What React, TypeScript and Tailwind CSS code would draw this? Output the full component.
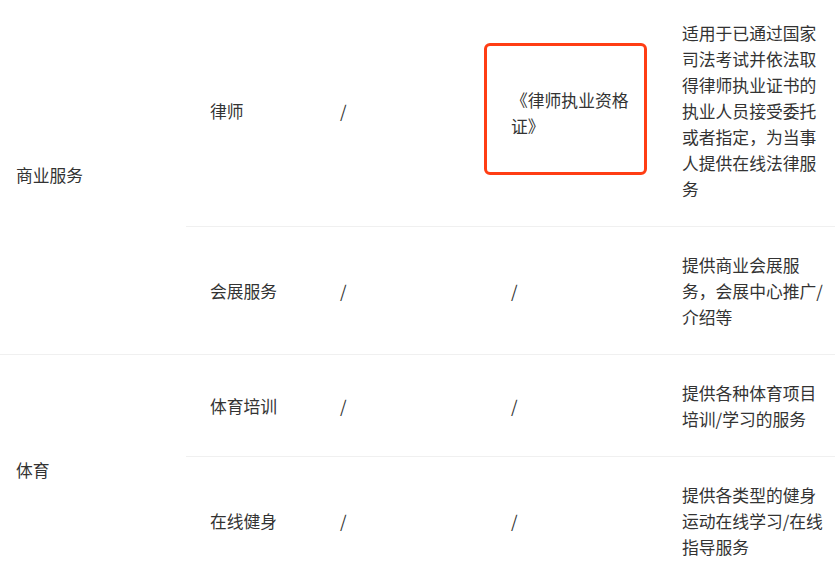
import React from 'react';

interface ServiceRow {
  name: string;
  permit: string;
  certificate: string;
  highlight?: boolean;
  description: string;
}

interface ServiceGroup {
  category: string;
  rows: ServiceRow[];
}

const groups: ServiceGroup[] = [
  {
    category: '商业服务',
    rows: [
      {
        name: '律师',
        permit: '/',
        certificate: '《律师执业资格证》',
        highlight: true,
        description: '适用于已通过国家司法考试并依法取得律师执业证书的执业人员接受委托或者指定，为当事人提供在线法律服务',
      },
      {
        name: '会展服务',
        permit: '/',
        certificate: '/',
        description: '提供商业会展服务，会展中心推广/介绍等',
      },
    ],
  },
  {
    category: '体育',
    rows: [
      {
        name: '体育培训',
        permit: '/',
        certificate: '/',
        description: '提供各种体育项目培训/学习的服务',
      },
      {
        name: '在线健身',
        permit: '/',
        certificate: '/',
        description: '提供各类型的健身运动在线学习/在线指导服务',
      },
    ],
  },
];

const cell = 'align-middle pt-[25px] pb-[24px] border-b border-[#f0f0f0]';

const App: React.FC = () => {
  return (
    <div
      className="w-[835px] h-[568px] overflow-hidden bg-white text-[#333333] text-[16.8px] leading-[26px]"
      style={{ fontFamily: '"Noto Sans CJK SC", "Noto Sans", sans-serif' }}
    >
      <table className="-mt-[5px] w-[835px] table-fixed border-collapse">
        <colgroup>
          <col className="w-[186px]" />
          <col className="w-[130px]" />
          <col className="w-[168px]" />
          <col className="w-[174px]" />
          <col className="w-[177px]" />
        </colgroup>
        <tbody>
          {groups.map((group) =>
            group.rows.map((row, i) => (
              <tr key={group.category + row.name}>
                {i === 0 && (
                  <td rowSpan={group.rows.length} className={`${cell} pl-4`}>
                    {group.category}
                  </td>
                )}
                <td className={`${cell} pl-6`}>{row.name}</td>
                <td className={`${cell} pl-6`}>{row.permit}</td>
                {row.highlight ? (
                  <td className={cell}>
                    <div className="mb-[5px] w-[163px] rounded-[6px] border-[3px] border-[#ff3d14] pt-[41px] pb-[33px] pl-6 pr-3">
                      {row.certificate}
                    </div>
                  </td>
                ) : (
                  <td className={`${cell} pl-[27px]`}>{row.certificate}</td>
                )}
                <td className={`${cell} pl-6 pr-2`}>{row.description}</td>
              </tr>
            ))
          )}
        </tbody>
      </table>
    </div>
  );
};

export default App;
